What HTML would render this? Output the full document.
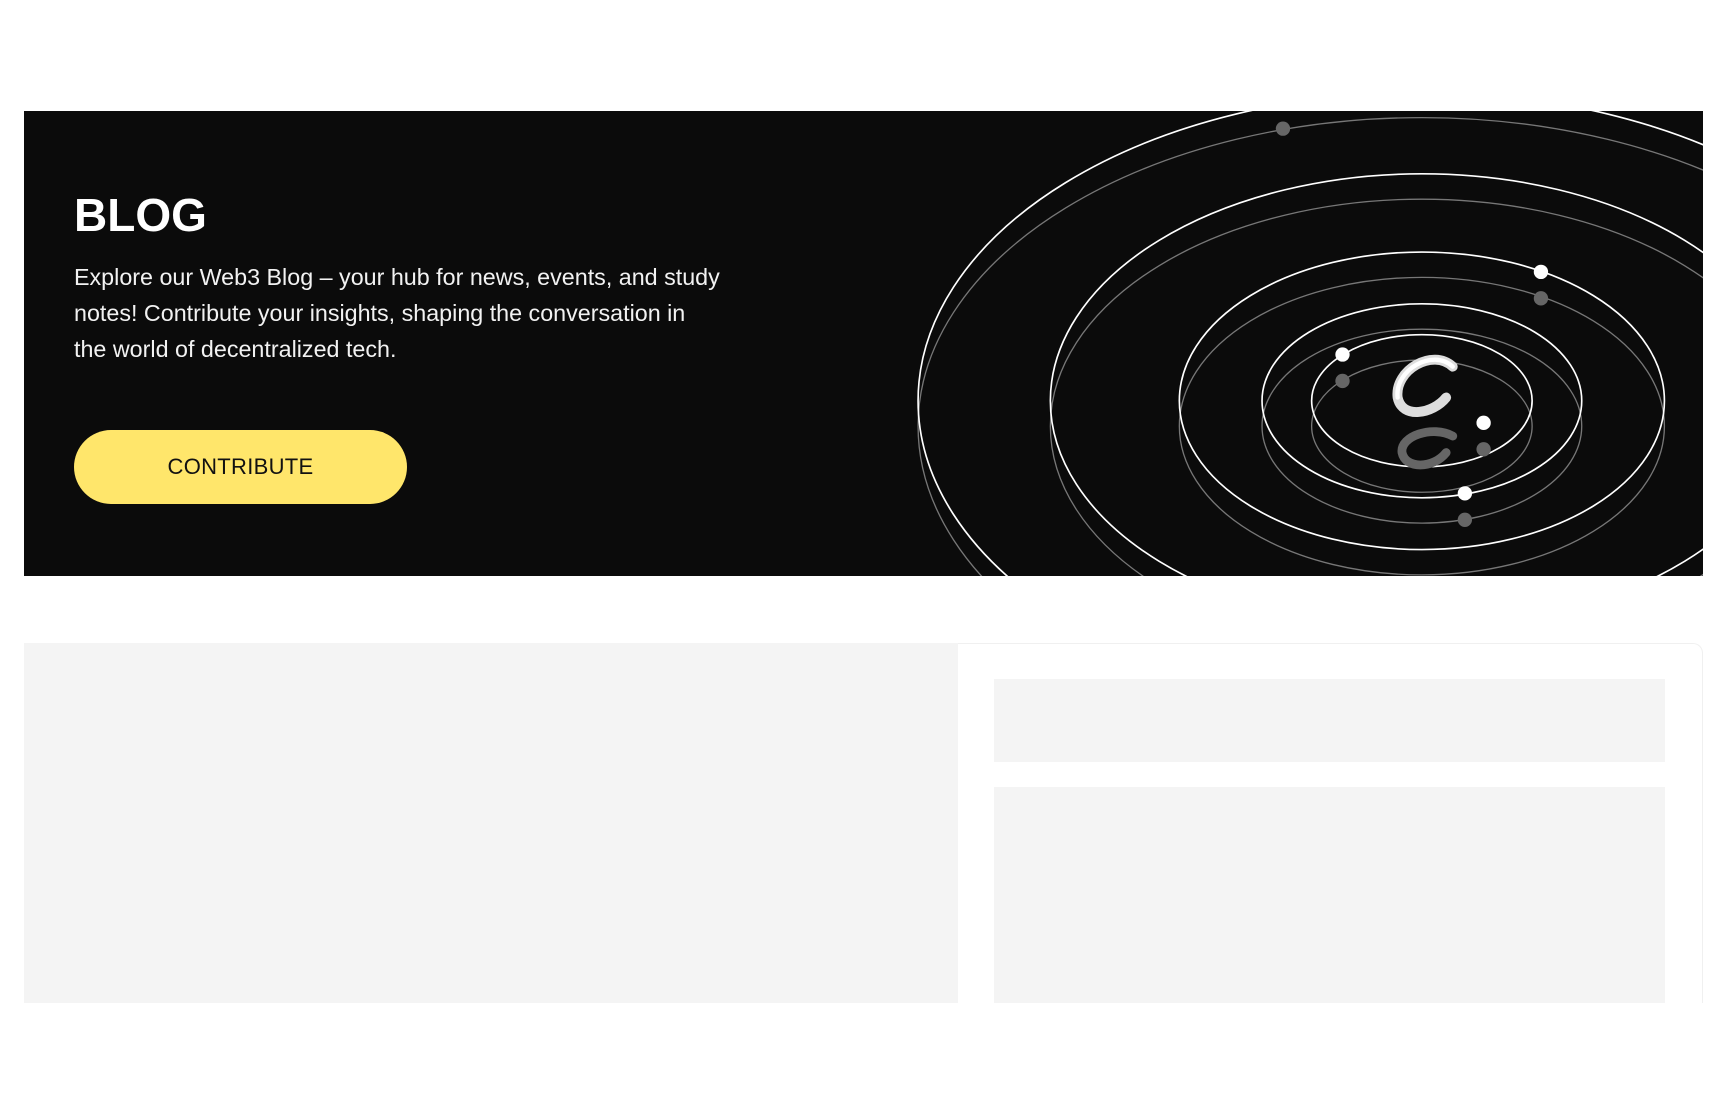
<!DOCTYPE html>
<html><head><meta charset="utf-8"><style>
*{margin:0;padding:0;box-sizing:border-box}
body{width:1728px;height:1112px;background:#fff;font-family:"Liberation Sans",sans-serif;position:relative;overflow:hidden}
.banner{position:absolute;left:24px;top:111px;width:1679px;height:465px;background:#0b0b0b;overflow:hidden}
h1{position:absolute;left:50px;top:77px;font-size:46px;font-weight:700;color:#fff;letter-spacing:0}
p{position:absolute;left:50px;top:148px;width:700px;font-size:23.3px;line-height:36px;color:#f2f2f2;white-space:nowrap}
.btn{position:absolute;left:50px;top:319px;width:333px;height:74px;border-radius:37px;background:#ffe66b;color:#111;font-size:22px;display:flex;align-items:center;justify-content:center;letter-spacing:0.3px}
svg{position:absolute;left:0;top:0}
.card{position:absolute;left:24px;top:643px;width:1679px;height:360px;border:1px solid #f0f0f0;border-bottom:none;border-radius:0 10px 0 0;background:#fff}
.l{position:absolute;left:24px;top:643px;width:934px;height:360px;background:#f4f4f4}
.b1{position:absolute;left:994px;top:679px;width:671px;height:83px;background:#f4f4f4}
.b2{position:absolute;left:994px;top:787px;width:671px;height:216px;background:#f4f4f4}
</style></head><body>
<div class="banner">
<svg width="1679" height="465" viewBox="22 100 1523 422" preserveAspectRatio="none">
<g fill="none" stroke="#777" stroke-width="1.2">
<ellipse cx="1290" cy="386" rx="457" ry="280"/>
<ellipse cx="1290" cy="386" rx="337" ry="206"/>
<ellipse cx="1290" cy="386" rx="220" ry="135"/>
<ellipse cx="1290" cy="386" rx="145" ry="88"/>
<ellipse cx="1290" cy="386" rx="100" ry="60"/>
</g>
<g fill="none" stroke="#fff" stroke-width="1.5">
<ellipse cx="1290" cy="363" rx="457" ry="280"/>
<ellipse cx="1290" cy="363" rx="337" ry="206"/>
<ellipse cx="1290" cy="363" rx="220" ry="135"/>
<ellipse cx="1290" cy="363" rx="145" ry="88"/>
<ellipse cx="1290" cy="363" rx="100" ry="60"/>
</g>
<g fill="#666"><circle cx="1164" cy="116" r="6.5"/><circle cx="1398" cy="270" r="6.5"/><circle cx="1218" cy="345" r="6.5"/><circle cx="1346" cy="407" r="6.5"/><circle cx="1329" cy="471" r="6.5"/></g>
<g fill="#fff"><circle cx="1398" cy="246" r="6.5"/><circle cx="1218" cy="321" r="6.5"/><circle cx="1346" cy="383" r="6.5"/><circle cx="1329" cy="447" r="6.5"/></g>
<g fill="none" stroke-linecap="round">
<path d="M1318 332 C1300 315 1265 335 1268 360 C1272 380 1300 375 1312 360" stroke="#ddd" stroke-width="9"/>
<path d="M1318 332 C1300 315 1265 335 1268 360" stroke="#fff" stroke-width="4"/>
<path d="M1318 395 C1300 385 1270 395 1272 410 C1275 425 1300 425 1312 410" stroke="#666" stroke-width="8"/>
</g>
</svg>
<h1>BLOG</h1>
<p>Explore our Web3 Blog – your hub for news, events, and study<br>notes! Contribute your insights, shaping the conversation in<br>the world of decentralized tech.</p>
<div class="btn">CONTRIBUTE</div>
</div>
<div class="card"></div>
<div class="l"></div>
<div class="b1"></div>
<div class="b2"></div>
</body></html>
